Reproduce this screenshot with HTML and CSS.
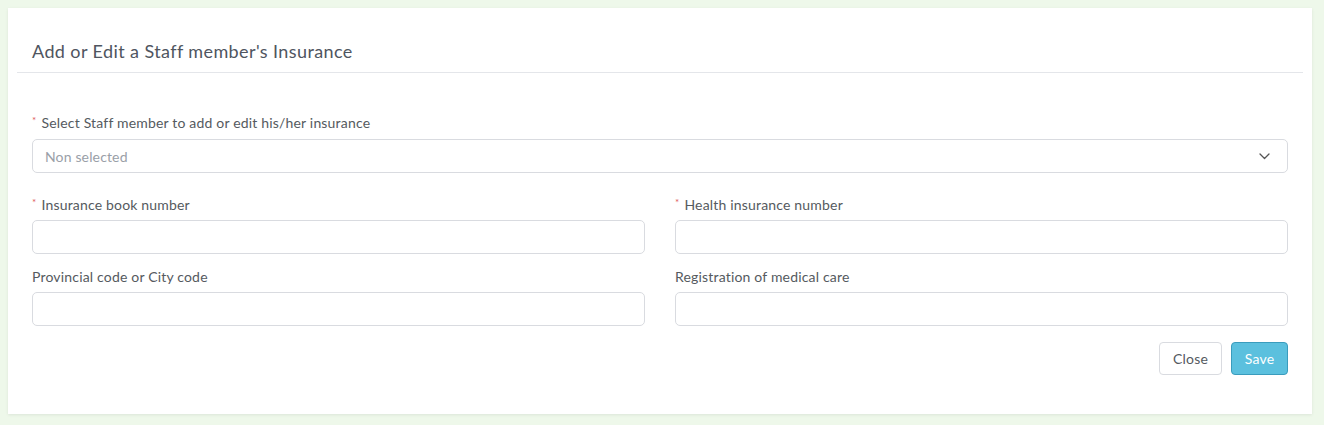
FILE: index.html
```html
<!DOCTYPE html>
<html lang="en">
<head>
<meta charset="utf-8">
<title>Staff Insurance</title>
<link rel="stylesheet" href="styles.css">
</head>
<body>
<div class="card">
  <div class="card-header">
    <h2 class="card-title">Add or Edit a Staff member's Insurance</h2>
  </div>
  <div class="card-body">
    <div class="field">
      <label class="label"><span class="req">*</span>Select Staff member to add or edit his/her insurance</label>
      <div class="select">
        <span class="placeholder">Non selected</span>
        <svg class="chev" width="11" height="7" viewBox="0 0 11 7"><path d="M1 1 L5.5 5.5 L10 1" fill="none" stroke="#555" stroke-width="1.3" stroke-linecap="round" stroke-linejoin="round"/></svg>
      </div>
    </div>
    <div class="grid">
      <div class="field">
        <label class="label"><span class="req">*</span>Insurance book number</label>
        <input class="input" type="text">
      </div>
      <div class="field">
        <label class="label"><span class="req">*</span>Health insurance number</label>
        <input class="input" type="text">
      </div>
      <div class="field">
        <label class="label">Provincial code or City code</label>
        <input class="input" type="text">
      </div>
      <div class="field">
        <label class="label">Registration of medical care</label>
        <input class="input" type="text">
      </div>
    </div>
    <div class="actions">
      <button class="btn btn-close">Close</button>
      <button class="btn btn-save">Save</button>
    </div>
  </div>
</div>
</body>
</html>
```

FILE: styles.css
```css
html, body {
  margin: 0;
  padding: 0;
}
body {
  background: #eef8ea;
  font-family: "Lato", "Open Sans", sans-serif;
  color: #4d5259;
  padding: 8px 12px 11px 8px;
  height: 425px;
  box-sizing: border-box;
}
.card {
  background: #fff;
  box-shadow: 0 1px 3px rgba(0,0,0,0.08);
  height: 406px;
  box-sizing: border-box;
}
.card-header {
  margin: 0 9px;
  padding: 31px 15px 9px;
  border-bottom: 1px solid #e4e6ea;
}
.card-title {
  margin: 0;
  font-size: 18px;
  font-weight: 400;
  line-height: 24px;
  color: #4f5560;
  letter-spacing: 0.4px;
}
.card-body {
  padding: 40px 24px 0;
}
.field {
  display: flex;
  flex-direction: column;
}
.label {
  font-size: 14px;
  line-height: 20px;
  color: #555a60;
  margin-bottom: 6px;
  letter-spacing: 0.18px;
}
.req {
  color: #e05a5a;
  font-size: 10px;
  vertical-align: top;
  line-height: 14px;
  margin-right: 5px;
}
.select {
  height: 34px;
  box-sizing: border-box;
  border: 1px solid #d9dbe0;
  border-radius: 5px;
  display: flex;
  align-items: center;
  justify-content: space-between;
  padding: 0 17px 0 12px;
}
.placeholder {
  font-size: 14px;
  color: #9aa0a8;
  letter-spacing: 0.15px;
}
.grid {
  display: grid;
  grid-template-columns: 1fr 1fr;
  column-gap: 30px;
  row-gap: 13px;
  margin-top: 22px;
}
.grid .label {
  margin-bottom: 5px;
}
.input {
  height: 34px;
  box-sizing: border-box;
  border: 1px solid #d9dbe0;
  border-radius: 5px;
  width: 100%;
  outline: none;
  font-family: inherit;
}
.actions {
  display: flex;
  justify-content: flex-end;
  gap: 9px;
  margin-top: 16px;
}
.btn {
  height: 33px;
  box-sizing: border-box;
  border-radius: 4px;
  font-family: inherit;
  font-size: 14px;
  padding: 0 10px;
  cursor: pointer;
  letter-spacing: 0.2px;
}
.btn-close {
  background: #fff;
  border: 1px solid #d9dbe0;
  color: #555a60;
  width: 63px;
}
.btn-save {
  background: #5bc0de;
  border: 1px solid #3a9cbd;
  color: #fff;
  width: 57px;
}
```
